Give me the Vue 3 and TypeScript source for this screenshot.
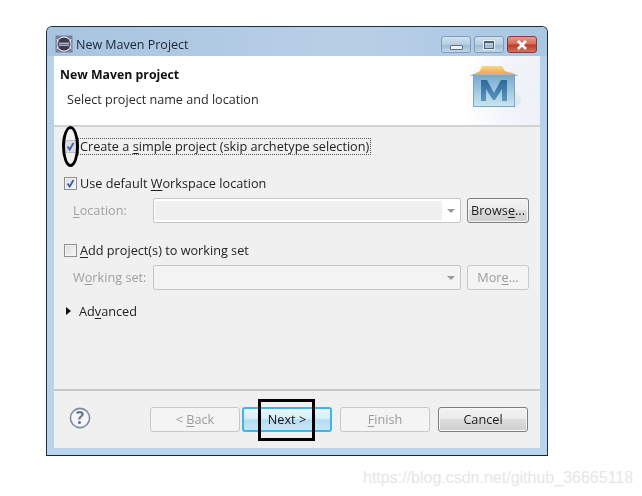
<script setup lang="ts">
const watermark: string = 'https://blog.csdn.net/github_36665118'
</script>

<template>
  <div class="page">
    <div class="window">
      <div class="titlebar">
        <svg class="app-icon" width="18" height="18" viewBox="0 0 18 18">
          <rect x="0.5" y="0.5" width="17" height="17" fill="#7d7a9c" />
          <circle cx="9" cy="9" r="7.4" fill="#fff" />
          <circle cx="9" cy="9" r="6.6" fill="#3b3a55" />
          <path d="M3.6 8.2h10.8M3.8 10.2h10.4" stroke="#e8e8ee" stroke-width="1" />
          <path d="M1.5 4.5l2 1.5M16.5 4.5l-2 1.5M1.5 13.5l2-1.5M16.5 13.5l-2-1.5" stroke="#fff" stroke-width="1" />
        </svg>
        <span class="title">New Maven Project</span>
        <div class="controls">
          <div class="ctl"><span class="min-glyph"></span></div>
          <div class="ctl"><span class="max-glyph"></span></div>
          <div class="ctl close">
            <svg width="14" height="10" viewBox="0 0 14 10">
              <path d="M3 1l8 8M11 1l-8 8" stroke="#fff" stroke-width="2.6" />
            </svg>
          </div>
        </div>
      </div>

      <div class="client">
        <header class="banner">
          <div class="banner-text">
            <h1>New Maven project</h1>
            <p>Select project name and location</p>
          </div>
          <svg class="maven" width="52" height="46" viewBox="0 0 52 46">
            <defs>
              <linearGradient id="box" x1="0" y1="0" x2="0" y2="1">
                <stop offset="0" stop-color="#7aa9cf" />
                <stop offset="1" stop-color="#c9e6ef" />
              </linearGradient>
              <linearGradient id="lid" x1="0" y1="0" x2="0" y2="1">
                <stop offset="0" stop-color="#f8d48c" />
                <stop offset="1" stop-color="#eba94c" />
              </linearGradient>
              <linearGradient id="em" x1="0" y1="0" x2="0" y2="1">
                <stop offset="0" stop-color="#2d689b" />
                <stop offset="1" stop-color="#5a97bf" />
              </linearGradient>
            </defs>
            <path d="M46 43V27l6 8v4z" fill="#dfe3e8" opacity="0.8" />
            <path d="M5 10l6-3 2-5h20l3 5 10 3z" fill="url(#lid)" />
            <path d="M0.5 12L4 10h42l3.5 2z" fill="#a9b8c4" />
            <rect x="4.5" y="11.5" width="41" height="31" fill="url(#box)" stroke="#7ea5c2" />
            <path d="M12 37V16h6l7 13 7-13h6v21h-5V25l-7 11h-2l-7-11v12z" fill="url(#em)" />
          </svg>
        </header>

        <main class="content">
          <div class="row first">
            <span class="check soft"><svg width="11" height="11" viewBox="0 0 11 11"><path d="M2.5 5.5l2.2 3L8.5 2" fill="none" stroke="#3c5fb0" stroke-width="1.8" /></svg></span>
            <span class="focus">Create a <u>s</u>imple project (skip archetype selection)</span>
          </div>
          <div class="row second">
            <span class="check"><svg width="11" height="11" viewBox="0 0 11 11"><path d="M2.5 5.5l2.2 3L8.5 2" fill="none" stroke="#3c5fb0" stroke-width="1.8" /></svg></span>
            <span class="label">Use default <u>W</u>orkspace location</span>
          </div>
          <div class="field">
            <span class="field-label"><u>L</u>ocation:</span>
            <div class="combo inset"><span class="fill"></span><span class="arrow"></span></div>
            <button class="btn browse">Brows<u>e</u>...</button>
          </div>
          <div class="row third">
            <span class="check"></span>
            <span class="label"><u>A</u>dd project(s) to working set</span>
          </div>
          <div class="field">
            <span class="field-label">W<u>o</u>rking set:</span>
            <div class="combo"><span class="fill"></span><span class="arrow"></span></div>
            <button class="btn off more">Mor<u>e</u>...</button>
          </div>
          <div class="row advanced">
            <span class="twisty"></span>
            <span class="label">Ad<u>v</u>anced</span>
          </div>
        </main>

        <footer class="footer">
          <svg class="help" width="22" height="22" viewBox="0 0 22 22">
            <circle cx="11" cy="11" r="9.6" fill="#f4f6fa" stroke="#7f8ba5" stroke-width="1.6" />
            <text x="11" y="16.5" text-anchor="middle" class="help-mark">?</text>
          </svg>
          <div class="buttons">
            <button class="btn off wide">&lt; <u>B</u>ack</button>
            <button class="btn next wide">Next &gt;</button>
            <button class="btn off wide finish"><u>F</u>inish</button>
            <button class="btn wide cancel">Cancel</button>
          </div>
        </footer>
      </div>
    </div>

    <span class="oval"></span>
    <span class="mark-box"></span>
    <span class="watermark">{{ watermark }}</span>
  </div>
</template>

<style>
html, body { margin: 0; background: #fff; }
</style>

<style scoped>
.page {
  position: relative;
  width: 642px;
  height: 496px;
  box-sizing: border-box;
  padding: 26px 0 0 46px;
  overflow: hidden;
  background: #fff;
  font-family: "Open Sans", "Noto Sans", sans-serif;
  font-size: 12.7px;
  color: #222;
}
.window {
  width: 502px;
  height: 430px;
  box-sizing: border-box;
  border: 1px solid #20303a;
  border-bottom-color: #0d2a33;
  border-radius: 6px 6px 0 0;
  background: linear-gradient(180deg, #a9c6e2 0, #b7d1ea 30px, #b9d4ec 100%);
  display: flex;
  flex-direction: column;
  filter: blur(0.4px);
}
.titlebar {
  height: 29px;
  flex: none;
  display: flex;
  align-items: center;
  padding-left: 8px;
  background: linear-gradient(90deg, #a7c4e0, #b9cfe6 60%, #a9c7e2);
  border-radius: 5px 5px 0 0;
}
.app-icon { flex: none; margin-top: 5px; }
.title { margin: 5px 0 0 3px; font-size: 12.5px; color: #1d2630; }
.controls {
  margin-left: auto;
  margin-right: 10px;
  margin-top: 6px;
  display: flex;
  gap: 3px;
}
.ctl {
  width: 30px;
  height: 17px;
  box-sizing: border-box;
  border: 1px solid #7f9cb8;
  border-radius: 3px;
  background: linear-gradient(180deg, #d2e1ef 0, #b5cde2 50%, #9cb9d3 52%, #c1d6e8 100%);
  display: flex;
  align-items: center;
  justify-content: center;
}
.min-glyph {
  width: 11px;
  height: 3px;
  margin-top: 5px;
  background: #eef2f6;
  border: 1px solid #5f6f80;
  border-radius: 1px;
}
.max-glyph {
  width: 8px;
  height: 5px;
  background: transparent;
  border: 1px solid #4f6072;
  border-top-width: 2px;
  outline: 1px solid #eef2f6;
}
.close {
  border-color: #8a3a3a;
  background: linear-gradient(180deg, #e49a8c 0, #d66a58 48%, #b83a2c 52%, #d4705c 100%);
}
.client {
  flex: 1;
  margin: 0 7px 7px;
  display: flex;
  flex-direction: column;
  background: #f0f0f0;
  min-height: 0;
}
.banner {
  height: 69px;
  flex: none;
  display: flex;
  justify-content: space-between;
  background:
    radial-gradient(circle at 100% 50%, #eef1f8 0, #f1f3f9 35px, #ffffff 80px);
  border-bottom: 2px solid #d2d2d2;
}
.banner-text { padding: 11px 0 0 6px; }
h1 { margin: 0; font-size: 12.3px; font-weight: 700; color: #111; line-height: 16px; }
p { margin: 9px 0 0 7px; font-size: 12.6px; color: #2b2b2b; line-height: 16px; }
.maven { margin: 8px 19px 0 0; flex: none; }
.content {
  flex: 1;
  padding: 7px 11px 0 10px;
  min-height: 0;
}
.row {
  height: 24px;
  display: flex;
  align-items: center;
}
.second { margin-top: 13px; }
.third { margin-top: 15px; }
.advanced { margin-top: 9px; }
.check {
  width: 13px;
  height: 13px;
  flex: none;
  box-sizing: border-box;
  border: 1px solid #8e8f8f;
  background: linear-gradient(135deg, #dedede, #f6f6f6);
  box-shadow: inset 0 0 0 1px #f4f4f4;
  margin-right: 3px;
  display: flex;
  align-items: center;
  justify-content: center;
}
.soft { border-color: #c0c0c0; background: #dcdcdc; box-shadow: none; }
.focus {
  line-height: 15px;
  padding: 0 1px;
  border: 1px dotted #555;
  margin-left: -2px;
}
.field {
  height: 25px;
  margin-top: 3px;
  display: flex;
  align-items: center;
}
.field-label {
  width: 89px;
  flex: none;
  padding: 0 0 2px 9px;
  box-sizing: border-box;
  color: #a0a0a0;
  white-space: nowrap;
}
.combo {
  width: 308px;
  height: 25px;
  flex: none;
  box-sizing: border-box;
  border: 1px solid #c2c6c8;
  border-radius: 2px;
  background: #f3f3f3;
  display: flex;
  align-items: center;
  padding: 1px 0 1px 1px;
}
.inset { background: #fff; padding: 2px 0 2px 1px; }
.fill { flex: 1; height: 100%; background: #f0f0f0; margin: 0 19px 0 0; }
.combo:not(.inset) .fill { background: transparent; }
.arrow {
  width: 0;
  height: 0;
  margin-right: 5px;
  margin-left: -14px;
  border-left: 4px solid transparent;
  border-right: 4px solid transparent;
  border-top: 4px solid #9a9a9a;
}
.btn {
  font: inherit;
  height: 25px;
  padding: 0 0 2px;
  box-sizing: border-box;
  border: 1px solid #7e7e7e;
  border-radius: 3px;
  color: #1c1c1c;
  background: linear-gradient(180deg, #f3f3f3 0, #ebebeb 45%, #dcdcdc 50%, #cfcfcf 100%);
  box-shadow: inset 0 0 0 1px #f7f7f7;
}
.browse, .more { width: 62px; margin-left: 6px; flex: none; }
.off {
  color: #9b9b9b;
  background: #f4f4f4;
  border-color: #c6c8c9;
  box-shadow: none;
}
.twisty {
  width: 0;
  height: 0;
  margin: 0 8px 0 2px;
  border-top: 4px solid transparent;
  border-bottom: 4px solid transparent;
  border-left: 5px solid #111;
}
.footer {
  height: 59px;
  flex: none;
  box-sizing: border-box;
  border-top: 2px solid #c8c8c8;
  padding: 16px 12px 0 15px;
  display: flex;
  align-items: flex-start;
}
.help { flex: none; }
.help-mark { font-family: "Open Sans", sans-serif; font-size: 17px; font-weight: 700; fill: #6d7789; }
.buttons { margin-left: auto; display: flex; }
.wide { width: 90px; }
.next {
  margin-left: 2px;
  border-color: #3cb6e6;
  border-width: 2px;
  background: linear-gradient(180deg, #e9f7fe 0, #d6eefb 45%, #b4dcf3 52%, #c6e6f8 100%);
  box-shadow: none;
  color: #111;
}
.finish { margin-left: 8px; }
.cancel { margin-left: 8px; }
u { text-underline-offset: 2px; }
.oval {
  position: absolute;
  left: 62px;
  top: 126px;
  width: 17px;
  height: 41px;
  box-sizing: border-box;
  border: 3px solid #000;
  border-radius: 50%;
}
.mark-box {
  position: absolute;
  left: 258px;
  top: 399px;
  width: 57px;
  height: 42px;
  box-sizing: border-box;
  border: 3px solid #000;
}
.watermark {
  position: absolute;
  left: 363px;
  top: 468px;
  font-family: "Liberation Sans", Arial, sans-serif;
  font-size: 16px;
  line-height: 20px;
  color: #e6e6e6;
  white-space: nowrap;
}
</style>
